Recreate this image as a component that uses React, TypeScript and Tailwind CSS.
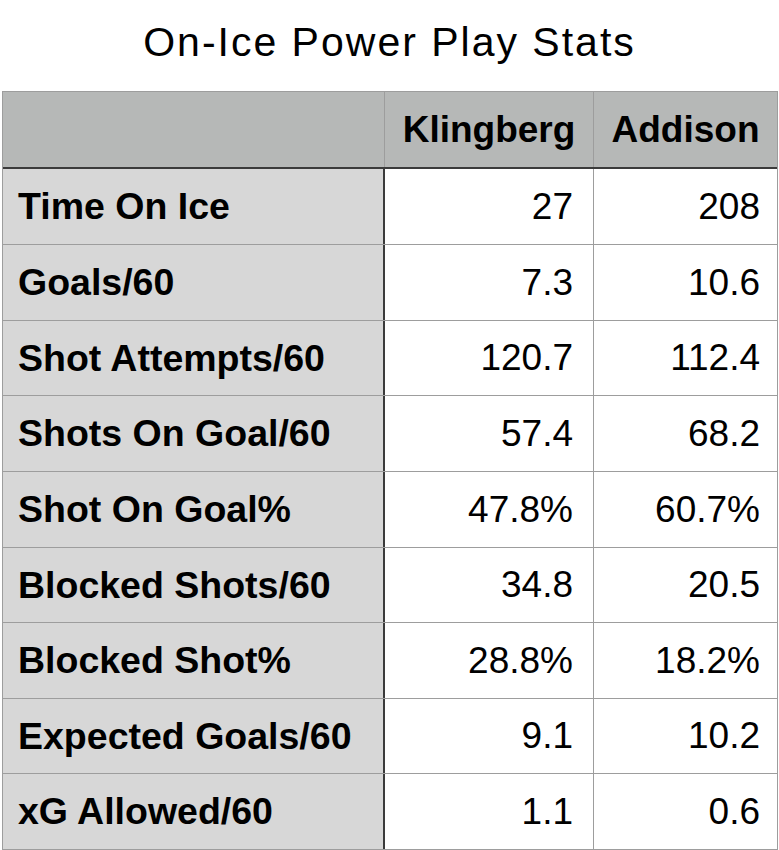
const rows = [
  { label: "Time On Ice", a: "27", b: "208", h: "h-[76px]" },
  { label: "Goals/60", a: "7.3", b: "10.6", h: "h-[76px]" },
  { label: "Shot Attempts/60", a: "120.7", b: "112.4", h: "h-[75px]" },
  { label: "Shots On Goal/60", a: "57.4", b: "68.2", h: "h-[76px]" },
  { label: "Shot On Goal%", a: "47.8%", b: "60.7%", h: "h-[76px]" },
  { label: "Blocked Shots/60", a: "34.8", b: "20.5", h: "h-[75px]" },
  { label: "Blocked Shot%", a: "28.8%", b: "18.2%", h: "h-[76px]" },
  { label: "Expected Goals/60", a: "9.1", b: "10.2", h: "h-[75px]" },
  { label: "xG Allowed/60", a: "1.1", b: "0.6", h: "h-[75px]" },
];

export default function App() {
  return (
    <div className="w-[779px] h-[850px] bg-white text-black font-['Liberation_Sans',Arial,sans-serif]">
      <div className="h-[91px] flex items-center justify-center pb-[6px]">
        <h1 className="text-[41px] tracking-[2px] leading-none">On-Ice Power Play Stats</h1>
      </div>
      <div className="ml-[2px] w-[776px] border border-[#9d9d9d]">
        <div className="flex h-[75px] bg-[#b6b8b7] text-[37px] font-bold border-b-2 border-[#3b3b3b] box-content">
          <div className="w-[382px] border-r border-[#9d9d9d]" />
          <div className="w-[209px] flex items-center justify-center border-r border-[#9d9d9d]">Klingberg</div>
          <div className="flex-1 flex items-center justify-center">Addison</div>
        </div>
        {rows.map((r, i) => (
          <div
            key={r.label}
            className={`flex ${r.h} text-[37px] ${i < rows.length - 1 ? "border-b border-[#9d9d9d]" : ""}`}
          >
            <div className="w-[382px] bg-[#d7d7d7] border-r-2 border-[#3b3b3b] flex items-center pl-[15px] font-bold text-[37.5px]">
              {r.label}
            </div>
            <div className="w-[209px] flex items-center justify-end pr-[20px] border-r border-[#9d9d9d]">{r.a}</div>
            <div className="flex-1 flex items-center justify-end pr-[17px]">{r.b}</div>
          </div>
        ))}
      </div>
    </div>
  );
}
